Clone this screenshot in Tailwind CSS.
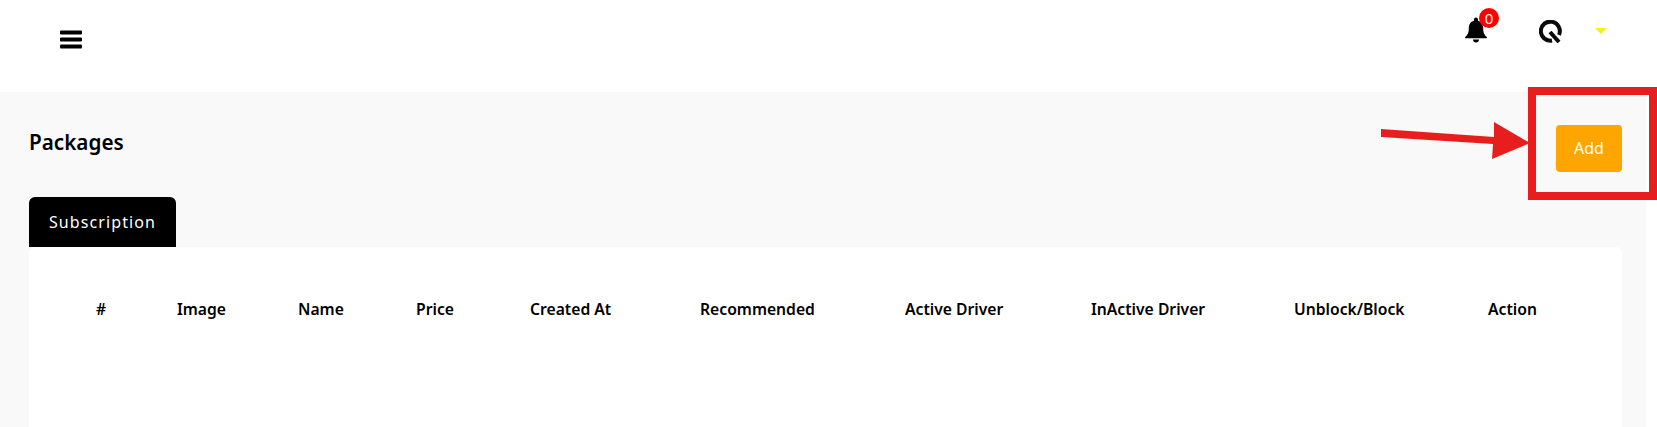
<!DOCTYPE html>
<html lang="en">
  <head>
    <meta charset="UTF-8" />
    <title>Packages</title>
    <script src="https://cdn.jsdelivr.net/npm/@tailwindcss/browser@4"></script>
  </head>
  <body class="h-[427px] w-[1657px] overflow-hidden bg-white font-['Noto_Sans',sans-serif] text-black">
    <!-- header -->
    <header class="flex h-[92px] items-start justify-between bg-white pl-[60px] pr-[50px]">
      <svg class="mt-[30px] h-[19px] w-[23px]" viewBox="0 0 23 19" fill="#000">
        <rect y="0.5" width="22" height="4" rx="1" />
        <rect y="7.5" width="22" height="4" rx="1" />
        <rect y="14.5" width="22" height="4" rx="1" />
      </svg>
      <div class="flex items-start">
        <div class="relative mt-[17px] h-[26px] w-[24px]">
          <svg class="h-[26px] w-[24px]" viewBox="0 0 24 26" fill="#000">
            <path d="M12 0.500c1.200 0 2 .9 2 2v1.300c3.600.9 5.200 3.900 5.200 7.400 0 4.500 1 6.300 3.600 8.800.4.500.1 1.300-.6 1.300H1.800c-.7 0-1-.8-.6-1.300 2.600-2.500 3.600-4.300 3.600-8.800 0-3.500 1.600-6.500 5.200-7.400V2.500c0-1.100.8-2 2-2z" />
            <path d="M9 22.500h6c0 1.700-1.300 3-3 3s-3-1.300-3-3z" />
          </svg>
          <span class="absolute left-[15px] top-[-9px] flex h-[20px] w-[20px] items-center justify-center rounded-full bg-[#ff0000] text-[15px] leading-none text-white">0</span>
        </div>
        <svg class="ml-[51px] mt-[20px] h-[23px] w-[24px]" viewBox="0 0 24 23" fill="none" stroke="#0a0a0a" stroke-width="4">
          <path d="M13 20.500A9.500 9.500 0 1 1 20 15" />
          <path d="M11 12l9 10" />
        </svg>
        <span class="ml-[32px] mt-[28px] h-0 w-0 border-x-[6px] border-t-[6px] border-x-transparent border-t-[#f2f01f]"></span>
      </div>
    </header>

    <!-- page -->
    <main class="relative h-[335px] w-[1646px] bg-[#f9f9f9] pl-[29px] pr-[24px]">
      <div class="flex items-start justify-between">
        <h1 class="mt-[36px] text-[20.700px] font-semibold leading-[28px]">Packages</h1>
        <button class="mt-[33px] h-[47px] w-[66px] rounded-[4px] bg-[#ffa500] pb-[2px] text-[16px] text-white">Add</button>
      </div>

      <div class="mt-[25px] flex h-[50px] w-[147px] items-center justify-center rounded-t-[6px] bg-black text-[16px] tracking-[1.1px] text-white">Subscription</div>

      <section class="h-[200px] rounded-[6px] bg-white pt-[50px]">
        <table class="table-fixed border-collapse text-left text-[15.700px] font-semibold leading-[24px]">
          <thead>
            <tr>
              <th class="w-[148px] pl-[67px] font-semibold">#</th>
              <th class="w-[121px] font-semibold">Image</th>
              <th class="w-[118px] font-semibold">Name</th>
              <th class="w-[114px] font-semibold">Price</th>
              <th class="w-[170px] font-semibold">Created At</th>
              <th class="w-[205px] font-semibold">Recommended</th>
              <th class="w-[186px] font-semibold">Active Driver</th>
              <th class="w-[203px] font-semibold">InActive Driver</th>
              <th class="w-[194px] font-semibold">Unblock/Block</th>
              <th class="w-[100px] font-semibold">Action</th>
            </tr>
          </thead>
        </table>
      </section>

      <!-- annotation drawn over the screenshot -->
      <div class="absolute left-[1528px] top-[-5px] h-[113px] w-[129px] border-[8px] border-[#e81e1e]"></div>
      <svg class="absolute left-[1375px] top-[25px] h-[45px] w-[160px]" viewBox="0 0 160 45" fill="#e81e1e">
        <path d="M6 12L119 20L119 5L155 26L117 42L118 27L6 20Z" />
      </svg>
    </main>
  </body>
</html>
